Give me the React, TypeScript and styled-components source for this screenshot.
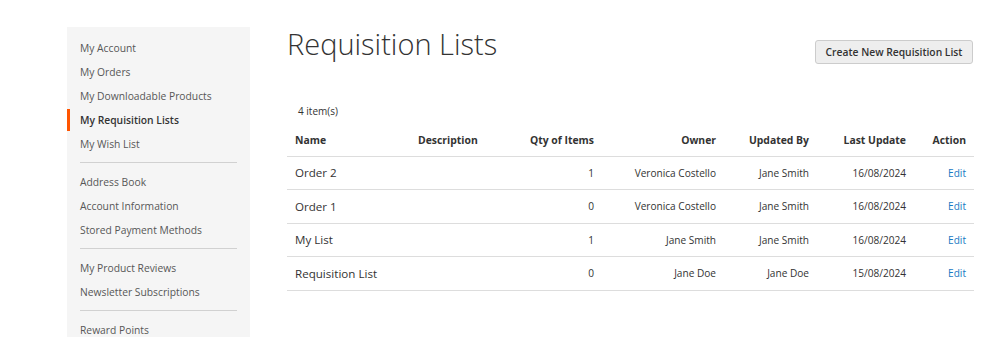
import React, { ReactElement } from 'react'
import styled, { createGlobalStyle } from 'styled-components'

const GlobalStyle = createGlobalStyle`
    html, body {
        margin: 0;
        padding: 0;
        background: #fff;
    }
    body {
        font-family: "Open Sans", "Liberation Sans", sans-serif;
        color: #333;
    }
`

interface NavItem {
    label: string;
    active?: boolean;
}

interface ListRow {
    name: string;
    description: string;
    qty: number;
    owner: string;
    updatedBy: string;
    lastUpdate: string;
}

const navGroups: NavItem[][] = [
    [
        { label: 'My Account' },
        { label: 'My Orders' },
        { label: 'My Downloadable Products' },
        { label: 'My Requisition Lists', active: true },
        { label: 'My Wish List' },
    ],
    [
        { label: 'Address Book' },
        { label: 'Account Information' },
        { label: 'Stored Payment Methods' },
    ],
    [
        { label: 'My Product Reviews' },
        { label: 'Newsletter Subscriptions' },
    ],
    [
        { label: 'Reward Points' },
    ],
]

const rows: ListRow[] = [
    { name: 'Order 2', description: '', qty: 1, owner: 'Veronica Costello', updatedBy: 'Jane Smith', lastUpdate: '16/08/2024' },
    { name: 'Order 1', description: '', qty: 0, owner: 'Veronica Costello', updatedBy: 'Jane Smith', lastUpdate: '16/08/2024' },
    { name: 'My List', description: '', qty: 1, owner: 'Jane Smith', updatedBy: 'Jane Smith', lastUpdate: '16/08/2024' },
    { name: 'Requisition List', description: '', qty: 0, owner: 'Jane Doe', updatedBy: 'Jane Doe', lastUpdate: '15/08/2024' },
]

const Page = styled.div`
    display: flex;
    align-items: flex-start;
    gap: 37px;
    padding: 27px 27px 0 67px;
    height: 337px;
    box-sizing: border-box;
    overflow: hidden;
`
const Sidebar = styled.nav`
    flex: 0 0 183px;
    background: #f5f5f5;
    padding: 9px 0 20px;
`
const NavList = styled.ul`
    list-style: none;
    margin: 0;
    padding: 0;
`
const NavLink = styled.li<{ $active?: boolean }>`
    position: relative;
    padding-left: 13px;
    line-height: 24px;
    font-size: 10.3px;
    color: ${p => (p.$active ? '#333' : '#575757')};
    font-weight: ${p => (p.$active ? 600 : 400)};
    &::before {
        content: '';
        display: ${p => (p.$active ? 'block' : 'none')};
        position: absolute;
        left: 0;
        top: 1px;
        bottom: 1px;
        width: 3px;
        background: #ff5501;
    }
`
const Divider = styled.li`
    height: 1px;
    margin: 6px 13px 7px;
    background: #d1d1d1;
`
const Main = styled.main`
    flex: 1;
    min-width: 0;
`
const TitleRow = styled.div`
    display: flex;
    justify-content: space-between;
    align-items: flex-start;
`
const Title = styled.h1`
    margin: -2.5px 0 0 0;
    font-size: 29px;
    line-height: 37px;
    font-weight: 300;
    color: #333;
`
const CreateButton = styled.button`
    margin-top: 13px;
    width: 158px;
    height: 24px;
    padding: 0;
    background: #eee;
    border: 1px solid #ccc;
    border-radius: 3px;
    font-family: "Open Sans", "Liberation Sans", sans-serif;
    font-size: 10.3px;
    font-weight: 600;
    color: #333;
`
const Count = styled.div`
    margin-top: 37px;
    padding-left: 11px;
    font-size: 10px;
    line-height: 20px;
    color: #333;
`
const Table = styled.table`
    margin-top: 3px;
    width: 687px;
    table-layout: fixed;
    border-collapse: collapse;
`
const Th = styled.th<{ $width: number; $align?: string }>`
    width: ${p => p.$width}px;
    height: 32px;
    padding: 0 8px;
    box-sizing: border-box;
    text-align: ${p => p.$align || 'left'};
    font-size: 10.4px;
    font-weight: 700;
    color: #333;
    border-bottom: 1px solid #ddd;
`
const Tr = styled.tr`
    height: 33.5px;
    border-bottom: 1px solid #ddd;
`
const Td = styled.td<{ $align?: string; $large?: boolean }>`
    padding: 0 8px;
    text-align: ${p => p.$align || 'left'};
    font-size: ${p => (p.$large ? '11.6px' : '10.1px')};
    color: #333;
    white-space: nowrap;
`
const EditLink = styled.a`
    color: #1979c3;
    text-decoration: none;
`

const columns = [
    { label: 'Name', width: 123, align: 'left' },
    { label: 'Description', width: 100, align: 'left' },
    { label: 'Qty of Items', width: 92, align: 'right' },
    { label: 'Owner', width: 122, align: 'right' },
    { label: 'Updated By', width: 93, align: 'right' },
    { label: 'Last Update', width: 97, align: 'right' },
    { label: 'Action', width: 60, align: 'right' },
]

export default function App(): ReactElement {
    return (
        <>
            <GlobalStyle />
            <Page>
                <Sidebar>
                    <NavList>
                        {navGroups.map((group, gi) => (
                            <React.Fragment key={gi}>
                                {gi > 0 && <Divider />}
                                {group.map(item => (
                                    <NavLink key={item.label} $active={item.active}>{item.label}</NavLink>
                                ))}
                            </React.Fragment>
                        ))}
                    </NavList>
                </Sidebar>
                <Main>
                    <TitleRow>
                        <Title>Requisition Lists</Title>
                        <CreateButton>Create New Requisition List</CreateButton>
                    </TitleRow>
                    <Count>4 item(s)</Count>
                    <Table>
                        <thead>
                            <tr>
                                {columns.map(c => (
                                    <Th key={c.label} $width={c.width} $align={c.align}>{c.label}</Th>
                                ))}
                            </tr>
                        </thead>
                        <tbody>
                            {rows.map(r => (
                                <Tr key={r.name}>
                                    <Td $large>{r.name}</Td>
                                    <Td>{r.description}</Td>
                                    <Td $align="right">{r.qty}</Td>
                                    <Td $align="right">{r.owner}</Td>
                                    <Td $align="right">{r.updatedBy}</Td>
                                    <Td $align="right">{r.lastUpdate}</Td>
                                    <Td $align="right"><EditLink href="#">Edit</EditLink></Td>
                                </Tr>
                            ))}
                        </tbody>
                    </Table>
                </Main>
            </Page>
        </>
    )
}
